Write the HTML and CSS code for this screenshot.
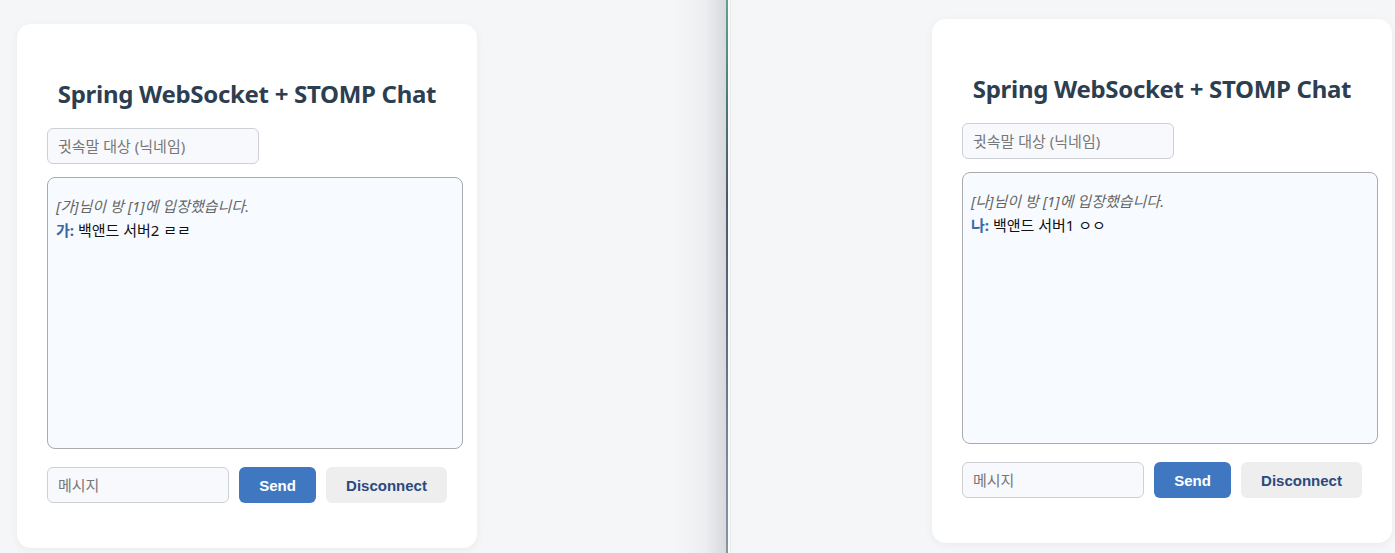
FILE: index.html
```html
<!DOCTYPE html>
<html>
<head>
    <title>Spring WebSocket + STOMP Chat</title>
    <link rel="stylesheet" href="styles.css">
</head>
<body>
    <div class="pane pane-left">
        <div class="card">
            <h2>Spring WebSocket + STOMP Chat</h2>
            <input class="whisper" type="text" placeholder="귓속말 대상 (닉네임)">
            <div class="chat">
                <div class="msg system">[가]님이 방 [1]에 입장했습니다.</div>
                <div class="msg"><b>가:</b> 백앤드 서버2 ㄹㄹ</div>
            </div>
            <div class="row">
                <input class="message" type="text" placeholder="메시지">
                <button class="send">Send</button>
                <button class="disconnect">Disconnect</button>
            </div>
        </div>
    </div>
    <div class="divider"></div>
    <div class="gap"></div>
    <div class="pane pane-right">
        <div class="card">
            <h2>Spring WebSocket + STOMP Chat</h2>
            <input class="whisper" type="text" placeholder="귓속말 대상 (닉네임)">
            <div class="chat">
                <div class="msg system">[나]님이 방 [1]에 입장했습니다.</div>
                <div class="msg"><b>나:</b> 백앤드 서버1 ㅇㅇ</div>
            </div>
            <div class="row">
                <input class="message" type="text" placeholder="메시지">
                <button class="send">Send</button>
                <button class="disconnect">Disconnect</button>
            </div>
        </div>
    </div>
</body>
</html>
```

FILE: styles.css
```css
* { margin: 0; padding: 0; box-sizing: border-box; }
body { display: flex; height: 100vh; overflow: hidden; background: #f5f6f8; font-family: "Noto Sans", "Noto Sans CJK KR", sans-serif; }
.pane { height: 100%; }
.pane-left { width: 726px; padding: 24px 0 0 17px; background: linear-gradient(to right, #f5f6f8 0, #f5f6f8 675px, #eceef0 705px, #d7d9dc 100%); }
.divider { width: 2px; height: 100%; background: linear-gradient(#5ea38d 0, #4e7478 110px, #4b5a6a 200px, #5f6b7d 330px, #7b879a 460px, #8793a3 100%); }
.gap { width: 3px; height: 100%; background: linear-gradient(to right, #fbfbfb 0, #fbfbfb 2px, #e9e9ea 2px); }
.pane-right { flex: 1; padding: 19px 0 0 201px; }
.card { width: 460px; height: 524px; background: #fff; border-radius: 14px; padding: 30px; box-shadow: 0 2px 10px rgba(0,0,0,0.05); }
.card h2 { font-size: 24px; line-height: 36px; font-weight: 700; color: #2c3e50; text-align: center; margin: 22px 0 16px; letter-spacing: -0.3px; }
input { height: 36px; padding: 0 10px; border: 1px solid #cdd0d4; border-radius: 6px; background: #f8f9fc; font-size: 15px; font-family: "Noto Sans", "Noto Sans CJK KR", sans-serif; color: #333; outline: none; }
input::placeholder { color: #777; }
.whisper { display: block; width: 212px; margin-bottom: 13px; }
.chat { width: 416px; height: 272px; border: 1px solid #a9abae; border-radius: 8px; background: #f7fbff; padding: 16px 8px 8px; font-size: 15px; line-height: 24px; color: #111; }
.msg b { color: #3a6aa5; }
.system { font-style: italic; color: #666; }
.row { display: flex; gap: 10px; margin-top: 18px; }
.message { width: 182px; }
button { height: 36px; padding: 0 20px; border: none; border-radius: 6px; font-family: "Liberation Sans", Arial, sans-serif; font-size: 15px; font-weight: 700; cursor: pointer; }
.send { width: 77px; background: #3f78c0; color: #fff; }
.disconnect { width: 121px; background: #eeeeee; color: #2b4a7d; }
```
